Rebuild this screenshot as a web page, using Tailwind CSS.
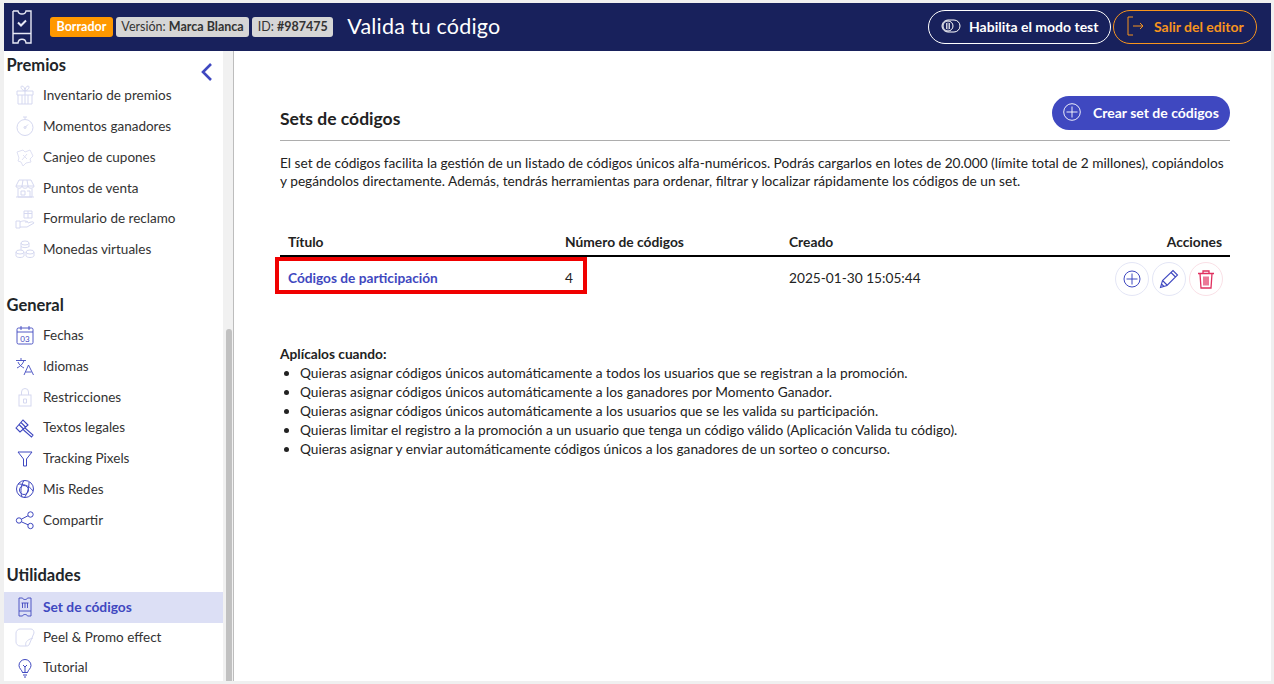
<!DOCTYPE html>
<html lang="es">
<head>
  <meta charset="UTF-8" />
  <title>Valida tu código</title>
  <script src="https://cdn.jsdelivr.net/npm/@tailwindcss/browser@4"></script>
</head>
<body class="bg-[#f0f0f0] text-[#212529] font-['Lato','Noto_Sans',sans-serif]">
  <div class="h-[684px] w-[1274px] overflow-hidden pt-[3px] pb-[3px] pl-[4px] pr-[3px] flex flex-col">

    <!-- Header -->
    <header class="h-[48px] shrink-0 bg-[#18215c] flex items-center pl-[6px] pr-[14px]">
      <svg class="w-[24px] h-[38px] text-[#e8eaf6] shrink-0" viewBox="0 0 24 38" fill="none" stroke="currentColor" stroke-width="1.4">
        <path d="M3 3h5c.5 4 7.500 4 8 0h5v11.500M3 3v11.500M3 25.500h18M3 25.500V35h5c.5-5 7.500-5 8 0h5v-9.500M3 14.500v11M21 14.500v11"/>
        <path d="M8 14.500l3 3 5-5" stroke-width="2"/>
      </svg>
      <div class="flex items-center gap-[3px] ml-[16px] text-[12.500px] leading-none">
        <span class="h-[20px] px-[6.500px] flex items-center rounded-[3px] bg-[#ff9800] text-white font-bold">Borrador</span>
        <span class="h-[20px] px-[5.500px] flex items-center rounded-[3px] bg-[#d6d6d6] text-[#333]">Versión:&nbsp;<b>Marca Blanca</b></span>
        <span class="h-[20px] px-[5.500px] flex items-center rounded-[3px] bg-[#d6d6d6] text-[#333]">ID:&nbsp;<b>#987475</b></span>
      </div>
      <h1 class="ml-[14px] pb-[2px] text-[21.500px] text-white tracking-[0.2px]">Valida tu código</h1>
      <div class="ml-auto flex items-center gap-[2px] text-[14px] font-bold">
        <a class="h-[34px] w-[183px] pb-[2px] flex items-center pl-[12px] rounded-full border border-white text-white">
          <svg class="w-[20px] h-[14px] mr-[8px]" viewBox="0 0 20 14" fill="none" stroke="currentColor"><rect x="1" y="1" width="18" height="12" rx="6"/><circle cx="7" cy="7" r="5"/><path d="M5.500 4v6M7 3.500v7M8.500 4v6" stroke-width=".8"/></svg>
          Habilita el modo test
        </a>
        <a class="h-[34px] w-[144px] pb-[2px] flex items-center pl-[12px] rounded-full border border-[#f7941d] text-[#f7941d]">
          <svg class="w-[18px] h-[20px] mr-[10px]" viewBox="0 0 18 20" fill="none" stroke="currentColor"><path d="M7 1H2v18h5M7 10h10M14 7l3 3-3 3"/></svg>
          Salir del editor
        </a>
      </div>
    </header>

    <div class="flex-1 min-h-0 flex">
      <!-- Sidebar -->
      <aside class="w-[219px] shrink-0 bg-white text-[13.500px] text-[#333] relative">
        <h2 class="h-[25px] pl-[2.500px] flex items-end text-[16.500px] font-bold text-[#212529] leading-[22px]">Premios</h2>
        <svg class="absolute left-[196px] top-[11px] w-[13px] h-[20px] text-[#3f48c0]" viewBox="0 0 13 20" fill="none" stroke="currentColor" stroke-width="2.600"><path d="M11 2L3 10l8 8"/></svg>
        <ul class="mt-[4px]">
          <li class="h-[30.800px] flex items-center">
            <svg class="w-[20px] h-[20px] ml-[11px] mr-[8px] text-[#d5d8f0]" viewBox="0 0 20 20" fill="none" stroke="currentColor"><path d="M2 6h16v4H2zM3 10v9h14v-9M10 6v13M7 19V10M13 19V10M10 6C6 5 5 1 7 1s3 3 3 5c0-2 1-5 3-5s1 4-3 5"/></svg>
            Inventario de premios
          </li>
          <li class="h-[30.800px] flex items-center">
            <svg class="w-[20px] h-[20px] ml-[11px] mr-[8px] text-[#d5d8f0]" viewBox="0 0 20 20" fill="none" stroke="currentColor"><circle cx="10" cy="11.500" r="8"/><path d="M8 1h4M10 1v2.500M10 11.500l3-3"/><circle cx="10" cy="11.500" r="1"/></svg>
            Momentos ganadores
          </li>
          <li class="h-[30.800px] flex items-center">
            <svg class="w-[20px] h-[20px] ml-[11px] mr-[8px] text-[#dfe1f3]" viewBox="0 0 20 20" fill="none" stroke="currentColor"><path d="M2 5l6-2 2 2 5-2 3 6-3 3 1 3-5 1-3 3-2-4-3-1 1-3zM8 8l4 4M12 7l-5 6"/></svg>
            Canjeo de cupones
          </li>
          <li class="h-[30.800px] flex items-center">
            <svg class="w-[20px] h-[20px] ml-[11px] mr-[8px] text-[#d5d8f0]" viewBox="0 0 20 20" fill="none" stroke="currentColor"><path d="M4 2h12l3 6H1zM1 8c0 3 6 3 6 0 0 3 6 3 6 0 0 3 6 3 6 0M3 11v8h14v-8M1 19h18M8 2L7 8M12 2l1 6M6 13h4v4H6zM12 13h3v6"/></svg>
            Puntos de venta
          </li>
          <li class="h-[30.800px] flex items-center">
            <svg class="w-[20px] h-[20px] ml-[11px] mr-[8px] text-[#d5d8f0]" viewBox="0 0 20 20" fill="none" stroke="currentColor"><path d="M1 12h4v7H1zM5 13c4-2 6-1 8 0h-3M5 18h7l7-4c-1-2-3-1-6 0M9 2h8v7H9zM13 2v7M9 4.500h8"/></svg>
            Formulario de reclamo
          </li>
          <li class="h-[30.800px] flex items-center">
            <svg class="w-[20px] h-[20px] ml-[11px] mr-[8px] text-[#d5d8f0]" viewBox="0 0 20 20" fill="none" stroke="currentColor"><ellipse cx="10" cy="4" rx="4" ry="2"/><path d="M6 4v7M14 4v4M6 7.500c1 1.500 7 1.500 8 0"/><ellipse cx="5" cy="13" rx="4" ry="2"/><path d="M1 13v4c1 2 7 2 8 0v-4"/><ellipse cx="15" cy="13" rx="4" ry="2"/><path d="M11 13v4c1 2 7 2 8 0v-4"/></svg>
            Monedas virtuales
          </li>
        </ul>

        <h2 class="mt-[30px] h-[22px] pl-[2.500px] flex items-center text-[16.500px] font-bold text-[#212529]">General</h2>
        <ul class="mt-[3px]">
          <li class="h-[30.800px] flex items-center">
            <svg class="w-[20px] h-[20px] ml-[11px] mr-[8px] text-[#3f48c0]" viewBox="0 0 20 20" fill="none" stroke="currentColor" stroke-width=".9"><rect x="2" y="3" width="16" height="16" rx="1.500"/><path d="M2 7h16M6 1v4M14 1v4"/><text x="10" y="16.500" font-size="8" text-anchor="middle" fill="currentColor" stroke="none">03</text></svg>
            Fechas
          </li>
          <li class="h-[30.800px] flex items-center">
            <svg class="w-[20px] h-[20px] ml-[11px] mr-[8px] text-[#3f48c0]" viewBox="0 0 20 20" fill="none" stroke="currentColor" stroke-width=".9"><path d="M1 4.500h10M6 2v2.500M9 4.500C8 8 5 10.500 2 12M3 6c1 3 4 5 6 6M9 19l4.500-10L18.500 19M10.500 16h6"/></svg>
            Idiomas
          </li>
          <li class="h-[30.800px] flex items-center">
            <svg class="w-[20px] h-[20px] ml-[11px] mr-[8px] text-[#d5d8f0]" viewBox="0 0 20 20" fill="none" stroke="currentColor"><rect x="4" y="8" width="12" height="11"/><path d="M6.500 8V5a3.500 3.500 0 0 1 7 0v3M8.500 12h3v4h-3z"/></svg>
            Restricciones
          </li>
          <li class="h-[30.800px] flex items-center">
            <svg class="w-[20px] h-[20px] ml-[11px] mr-[8px] text-[#3f48c0]" viewBox="0 0 20 20" fill="none" stroke="currentColor" stroke-width="1.100"><path d="M1 10l7-8 5 5-8 7zM4 6.500l5 5M6 4.500l5 5M10 10l8 7-1.500 2-8-7"/></svg>
            Textos legales
          </li>
          <li class="h-[30.800px] flex items-center">
            <svg class="w-[20px] h-[20px] ml-[11px] mr-[8px] text-[#3f48c0]" viewBox="0 0 20 20" fill="none" stroke="currentColor" stroke-width="1"><path d="M3 4h14l-5.500 7v7h-3v-7z"/></svg>
            Tracking Pixels
          </li>
          <li class="h-[30.800px] flex items-center">
            <svg class="w-[20px] h-[20px] ml-[11px] mr-[8px] text-[#3f48c0]" viewBox="0 0 20 20" fill="none" stroke="currentColor" stroke-width="1"><circle cx="10" cy="10" r="8.500"/><circle cx="9" cy="11" r="4.500"/><path d="M3 5c4 0 11 1 15 7M9 1.500C6 6 5 12 7 18M14 3c0 5-1 11-5 16"/></svg>
            Mis Redes
          </li>
          <li class="h-[30.800px] flex items-center">
            <svg class="w-[20px] h-[20px] ml-[11px] mr-[8px] text-[#3f48c0]" viewBox="0 0 20 20" fill="none" stroke="currentColor" stroke-width="1"><circle cx="4" cy="10.500" r="2.700"/><circle cx="15.500" cy="4.500" r="2.700"/><circle cx="15.500" cy="16" r="2.700"/><path d="M6.400 9.200l6.700-3.500M6.400 11.800l6.700 3"/></svg>
            Compartir
          </li>
        </ul>

        <h2 class="mt-[29px] h-[22px] pl-[2.500px] flex items-center text-[16.500px] font-bold text-[#212529]">Utilidades</h2>
        <ul class="mt-[6px]">
          <li class="h-[31px] pb-[2px] flex items-center bg-[#dcdff5] text-[#3f48c0] text-[13.800px] font-bold">
            <svg class="w-[20px] h-[20px] ml-[11px] mr-[8px]" viewBox="0 0 20 20" fill="none" stroke="currentColor" stroke-width=".9"><path d="M4 1h3.500c.5 2 4.500 2 5 0H16v18h-3.500c-.5-2-4.500-2-5 0H4zM4 14h12M7.500 6v5M10 6v5M12.500 6v5M6.500 6h7"/></svg>
            Set de códigos
          </li>
          <li class="-mt-[2px] h-[30.800px] flex items-center">
            <svg class="w-[20px] h-[20px] ml-[11px] mr-[8px] text-[#d5d8f0]" viewBox="0 0 20 20" fill="none" stroke="currentColor"><path d="M5 2h11c2 0 3 2 3 4l-5 12c-1 1-2 1-3 1H5c-2 0-4-2-4-4V6c0-2 2-4 4-4zM11 19c-1-3 0-6 7-8"/></svg>
            Peel &amp; Promo effect
          </li>
          <li class="h-[30.800px] flex items-center">
            <svg class="w-[20px] h-[20px] ml-[11px] mr-[8px] text-[#3f48c0]" viewBox="0 0 20 20" fill="none" stroke="currentColor" stroke-width="1"><path d="M7.500 14.500C7 12 4 10.500 4 7.500a6 6 0 0 1 12 0c0 3-3 4.500-3.500 7zM7.500 14.500h5M8 17h4M9 19h2M10 14.500V9l-2-2M10 9l2-2"/></svg>
            Tutorial
          </li>
        </ul>
      </aside>

      <!-- Scrollbar -->
      <div class="w-[11px] shrink-0 bg-[#f1f1f1] border-r border-[#bdbdbd] relative">
        <div class="absolute left-[3px] top-[278px] bottom-0 w-[6px] rounded-t-full bg-[#c1c1c1]"></div>
      </div>

      <!-- Main -->
      <main class="flex-1 min-w-0 bg-white pl-[46px] pr-[41px] text-[13.700px] text-[#222]">
        <div class="flex items-end justify-between h-[90px] pb-[8px] border-b border-[#adadad]">
          <h2 class="text-[17.500px] font-bold leading-[24px] pb-[1px]">Sets de códigos</h2>
          <a class="h-[34px] w-[178px] mb-[2px] pb-[2px] flex items-center pl-[11px] rounded-full bg-[#3f48c0] text-white text-[14px] font-bold">
            <svg class="w-[18px] h-[18px] mr-[12px]" viewBox="0 0 18 18" fill="none" stroke="currentColor" stroke-width=".9"><circle cx="9" cy="9" r="8.300"/><path d="M9 3.500v11M3.500 9h11"/></svg>
            Crear set de códigos
          </a>
        </div>

        <p class="mt-[13px] leading-[18px]">El set de códigos facilita la gestión de un listado de códigos únicos alfa-numéricos. Podrás cargarlos en lotes de 20.000 (límite total de 2 millones), copiándolos y pegándolos directamente. Además, tendrás herramientas para ordenar, filtrar y localizar rápidamente los códigos de un set.</p>

        <table class="mt-[39px] w-full table-fixed">
          <thead>
            <tr class="h-[27px] border-b-2 border-black text-left font-bold text-[13.800px]">
              <th class="w-[285px] pl-[8px] font-bold">Título</th>
              <th class="w-[224px] font-bold">Número de códigos</th>
              <th class="font-bold">Creado</th>
              <th class="w-[120px] pr-[8px] text-right font-bold">Acciones</th>
            </tr>
          </thead>
          <tbody>
            <tr class="h-[44px]">
              <td class="pl-[8px] text-[#3f48c0] font-bold">Códigos de participación</td>
              <td>4</td>
              <td>2025-01-30 15:05:44</td>
              <td class="pr-[7px]">
                <div class="flex justify-end gap-[3px]">
                  <span class="w-[34px] h-[34px] rounded-full border border-[#e4e6f6] flex items-center justify-center text-[#3f48c0]">
                    <svg class="w-[18px] h-[18px]" viewBox="0 0 18 18" fill="none" stroke="currentColor" stroke-width="1"><circle cx="9" cy="9" r="8"/><path d="M9 3.500v11M3.500 9h11"/></svg>
                  </span>
                  <span class="w-[34px] h-[34px] rounded-full border border-[#e4e6f6] flex items-center justify-center text-[#3f48c0]">
                    <svg class="w-[20px] h-[20px]" viewBox="0 0 20 20" fill="none" stroke="currentColor" stroke-width="1.100"><path d="M1.500 18.500l2-7L14 1.500l4.500 4.500L8 16.500zM3.500 11.500l5 5M12 3.500l4.500 4.500M2.500 15l2.500 2.500"/></svg>
                  </span>
                  <span class="w-[34px] h-[34px] rounded-full border border-[#fae0e6] flex items-center justify-center text-[#e0305f]">
                    <svg class="w-[20px] h-[20px]" viewBox="0 0 20 20" fill="none" stroke="currentColor" stroke-width="1.300"><path d="M2 4.500h16M7 4.500V2h6v2.500M4 4.500l1 14.500h10l1-14.500M8 7.500v9M10 7.500v9M12 7.500v9"/></svg>
                  </span>
                </div>
              </td>
            </tr>
          </tbody>
        </table>

        <div class="mt-[44px] leading-[19px]">
          <p class="font-bold">Aplícalos cuando:</p>
          <ul class="list-disc pl-[20px]">
            <li>Quieras asignar códigos únicos automáticamente a todos los usuarios que se registran a la promoción.</li>
            <li>Quieras asignar códigos únicos automáticamente a los ganadores por Momento Ganador.</li>
            <li>Quieras asignar códigos únicos automáticamente a los usuarios que se les valida su participación.</li>
            <li>Quieras limitar el registro a la promoción a un usuario que tenga un código válido (Aplicación Valida tu código).</li>
            <li>Quieras asignar y enviar automáticamente códigos únicos a los ganadores de un sorteo o concurso.</li>
          </ul>
        </div>
      </main>
    </div>
  </div>

  <!-- Red highlight drawn over the screenshot -->
  <div class="absolute left-[275px] top-[257px] w-[312px] h-[37px] border-[4px] border-[#f00000]"></div>
</body>
</html>
